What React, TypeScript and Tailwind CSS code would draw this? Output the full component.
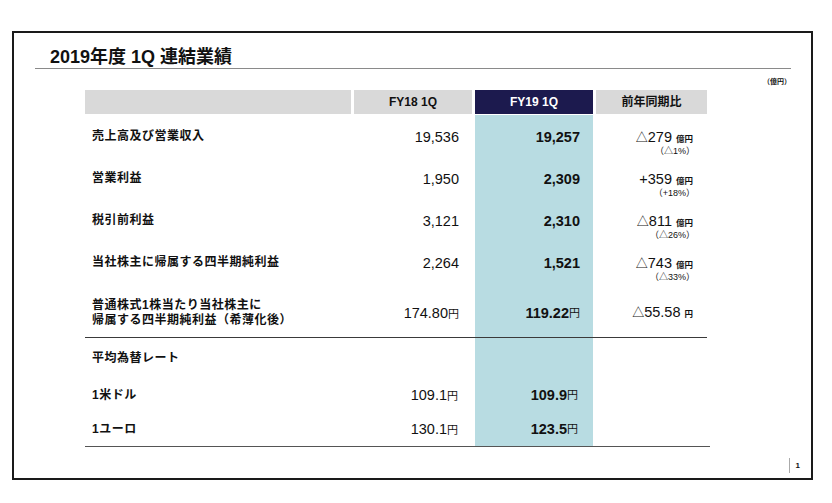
import React from "react";

const font = { fontFamily: '"Liberation Sans", "Noto Sans CJK JP", sans-serif' };

type Row = { label: string; fy18: string; fy19: string; diff: string; unit: string; pct?: string };

const mainRows: Row[] = [
  { label: "売上高及び営業収入", fy18: "19,536", fy19: "19,257", diff: "279", unit: "億円", pct: "（△1%）" },
  { label: "営業利益", fy18: "1,950", fy19: "2,309", diff: "+359", unit: "億円", pct: "（+18%）" },
  { label: "税引前利益", fy18: "3,121", fy19: "2,310", diff: "811", unit: "億円", pct: "（△26%）" },
  { label: "当社株主に帰属する四半期純利益", fy18: "2,264", fy19: "1,521", diff: "743", unit: "億円", pct: "（△33%）" },
];

const Diff = ({ v }: { v: string }) =>
  v.startsWith("+") ? <span>{v}</span> : (
    <span>
      <span className="text-[12px]">△</span>
      {v}
    </span>
  );

const cols = "grid grid-cols-[266px_118px_118px_111px] gap-x-[3px] w-[622px]";

export default function App() {
  return (
    <div className="w-[832px] h-[503px] bg-white pt-[31px] pl-[12px] text-[#111]" style={font}>
      <div className="w-[801px] h-[449px] border-2 border-[#1a1a1a] flex flex-col">
        {/* title */}
        <div className="ml-[21px] mt-[13px] w-[756px] h-[23px] border-b border-[#8a8a8a]">
          <p className="pl-[15px] text-[18px] leading-[22px] font-bold">2019年度 1Q 連結業績</p>
        </div>
        <p className="ml-[21px] w-[756px] mt-[8px] text-right text-[7px] leading-[10px] font-bold">（億円）</p>

        <div className="ml-[71px] mt-[3px] flex flex-col">
          {/* header */}
          <div className={`${cols} h-[24px] text-[12px] font-bold`}>
            <div className="bg-[#d9d9d9]" />
            <div className="bg-[#d9d9d9] flex items-center justify-center">FY18 1Q</div>
            <div className="bg-[#1c1a4e] text-white flex items-center justify-center">FY19 1Q</div>
            <div className="bg-[#d9d9d9] flex items-center justify-center">前年同期比</div>
          </div>

          <div className="mt-[1px]">
            {mainRows.map((r, i) => (
              <div key={r.label} className={`${cols} ${i === 0 ? "h-[43px] pt-[12px]" : "h-[42px] pt-[11px]"}`}>
                <div className="pl-[7px] text-[12px] leading-[18px] font-bold tracking-[0.5px]">{r.label}</div>
                <div className="pr-[13px] text-right text-[14.5px] leading-[20px]">{r.fy18}</div>
                <div className={`bg-[#b8dce2] pr-[13px] text-right text-[14.5px] leading-[20px] font-bold ${i === 0 ? "-mt-[12px] pt-[12px]" : "-mt-[11px] pt-[11px]"}`}>
                  {r.fy19}
                </div>
                <div className="pr-[14px] text-right">
                  <p className="text-[14.5px] leading-[20px]">
                    <Diff v={r.diff} /> <span className="text-[8.5px] font-bold">{r.unit}</span>
                  </p>
                  <p className="text-[9px] leading-[11px] -mt-[3px] -mr-[2px]">{r.pct}</p>
                </div>
              </div>
            ))}

            <div className={`${cols} h-[53px] pt-[5px] items-center`}>
              <div className="pl-[7px] text-[12px] leading-[15px] font-bold tracking-[0.5px]">
                <p>普通株式1株当たり当社株主に</p>
                <p>帰属する四半期純利益（希薄化後）</p>
              </div>
              <div className="pr-[13px] text-right text-[14.5px] leading-[20px]">
                174.80<span className="text-[11px]">円</span>
              </div>
              <div className="bg-[#b8dce2] self-stretch -mt-[5px] pr-[13px] flex items-center justify-end pt-[5px] text-[14.5px] leading-[20px] font-bold">
                119.22<span className="text-[11px] font-normal">円</span>
              </div>
              <div className="pr-[14px] text-right text-[14.5px] leading-[20px]">
                <Diff v="55.58" /> <span className="text-[8.5px] font-bold">円</span>
              </div>
            </div>

            <div className="w-[622px] h-px bg-[#3a3a3a]" />

            <div className={`${cols} h-[40px] items-center`}>
              <div className="pl-[7px] text-[12px] font-bold tracking-[0.5px]">平均為替レート</div>
              <div />
              <div className="bg-[#b8dce2] self-stretch" />
              <div />
            </div>
            {[
              { label: "1米ドル", a: "109.1", b: "109.9" },
              { label: "1ユーロ", a: "130.1", b: "123.5" },
            ].map((r) => (
              <div key={r.label} className={`${cols} h-[34px] items-center`}>
                <div className="pl-[7px] text-[12px] font-bold tracking-[0.5px]">{r.label}</div>
                <div className="pr-[14px] text-right text-[14.5px] leading-[20px]">
                  {r.a}<span className="text-[11px]">円</span>
                </div>
                <div className="bg-[#b8dce2] self-stretch pr-[15px] flex items-center justify-end text-[14.5px] leading-[20px] font-bold">
                  {r.b}<span className="text-[11px] font-normal">円</span>
                </div>
                <div />
              </div>
            ))}
            <div className="w-[625px] h-px bg-[#555]" />
          </div>
        </div>

        {/* page number */}
        <div className="mt-[11px] flex justify-end">
          <div className="mr-[11px] h-[15px] border-l border-[#aaa] pl-[6px] text-[8px] leading-[15px] font-bold">1</div>
        </div>
      </div>
    </div>
  );
}
